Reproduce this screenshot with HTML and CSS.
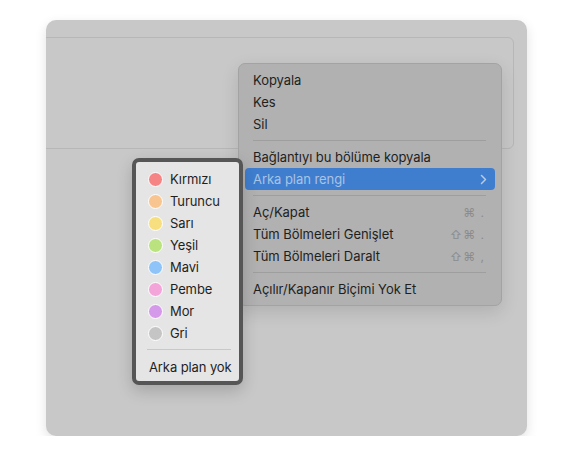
FILE: index.html
```html
<!DOCTYPE html>
<html lang="tr">
<head>
<meta charset="utf-8">
<link rel="stylesheet" href="styles.css">
</head>
<body>
<div class="window">
  <div class="card"></div>

  <div class="menu">
    <div class="item"><span>Kopyala</span></div>
    <div class="item"><span>Kes</span></div>
    <div class="item"><span>Sil</span></div>
    <div class="sep"></div>
    <div class="item"><span>Bağlantıyı bu bölüme kopyala</span></div>
    <div class="item active"><span>Arka plan rengi</span>
      <svg class="chev" width="7" height="11" viewBox="0 0 7 11"><path d="M1.5 1.5 L5.5 5.5 L1.5 9.5" fill="none" stroke="currentColor" stroke-width="1.5" stroke-linecap="round" stroke-linejoin="round"/></svg>
    </div>
    <div class="sep"></div>
    <div class="item"><span>Aç/Kapat</span><span class="key">⌘ .</span></div>
    <div class="item"><span>Tüm Bölmeleri Genişlet</span><span class="key">⇧⌘ .</span></div>
    <div class="item"><span>Tüm Bölmeleri Daralt</span><span class="key">⇧⌘ ,</span></div>
    <div class="sep"></div>
    <div class="item"><span>Açılır/Kapanır Biçimi Yok Et</span></div>
  </div>

  <div class="submenu">
    <div class="sitem"><span class="dot red"></span>Kırmızı</div>
    <div class="sitem"><span class="dot orange"></span>Turuncu</div>
    <div class="sitem"><span class="dot yellow"></span>Sarı</div>
    <div class="sitem"><span class="dot green"></span>Yeşil</div>
    <div class="sitem"><span class="dot blue"></span>Mavi</div>
    <div class="sitem"><span class="dot pink"></span>Pembe</div>
    <div class="sitem"><span class="dot purple"></span>Mor</div>
    <div class="sitem"><span class="dot gray"></span>Gri</div>
    <div class="ssep"></div>
    <div class="sitem none">Arka plan yok</div>
  </div>
</div>
</body>
</html>
```

FILE: styles.css
```css
html, body {
  margin: 0;
  padding: 0;
  background: #ffffff;
}
body {
  font-family: "Inter", "Liberation Sans", sans-serif;
  font-size: 13px;
  color: #1f1f1f;
  padding: 20px 0 0 46px;
}
.window {
  position: relative;
  width: 481px;
  height: 416px;
  background: #c8c8c8;
  border-radius: 10px;
  box-shadow: 0 4px 12px rgba(0,0,0,0.12);
  overflow: hidden;
}
.card {
  margin: 17px 0 0 -8px;
  width: 476px;
  height: 112px;
  border: 1px solid #b7b7b7;
  border-radius: 6px;
  box-sizing: border-box;
}
.menu {
  position: absolute;
  left: 192px;
  top: 43px;
  width: 264px;
  box-sizing: border-box;
  padding: 5px 6px 5px;
  background: #b1b1b1;
  border: 1px solid #a3a3a3;
  border-radius: 7px;
  box-shadow: 0 6px 18px rgba(0,0,0,0.12);
}
.item {
  height: 22px;
  display: flex;
  align-items: center;
  justify-content: space-between;
  padding: 0 10px 0 8px;
  border-radius: 4px;
  white-space: nowrap;
  letter-spacing: -0.05px;
}
.item.active {
  background: #3f7ecf;
  color: #a9c3e4;
  padding-right: 8px;
}
.chev { color: #b6cbe6; }
.key {
  color: #8c8c8c;
  font-size: 12px;
  letter-spacing: 1px;
}
.sep {
  height: 1px;
  background: #9e9e9e;
  margin: 5px 9px 5px 8px;
}
.submenu {
  position: absolute;
  left: 86px;
  top: 138px;
  width: 111px;
  box-sizing: border-box;
  padding: 6px 0 3px;
  background: #e5e5e5;
  border: 4px solid #565656;
  border-radius: 7px;
  box-shadow: 0 6px 16px rgba(0,0,0,0.18);
}
.sitem {
  height: 22px;
  display: flex;
  align-items: center;
  padding-left: 12px;
  white-space: nowrap;
  letter-spacing: -0.1px;
}
.dot {
  width: 15px;
  height: 15px;
  border-radius: 50%;
  box-sizing: border-box;
  border: 1px solid #ffffff;
  margin-right: 7px;
  flex: none;
}
.red { background: #f58585; }
.orange { background: #f8c490; }
.yellow { background: #f7df7f; }
.green { background: #bae37f; }
.blue { background: #8fc4f8; }
.pink { background: #f3a4d9; }
.purple { background: #d49ae9; }
.gray { background: #c5c5c5; }
.ssep {
  height: 1px;
  background: #c8c8c8;
  margin: 5px 8px 6px 11px;
}
.sitem.none { padding-left: 13px; }
```
